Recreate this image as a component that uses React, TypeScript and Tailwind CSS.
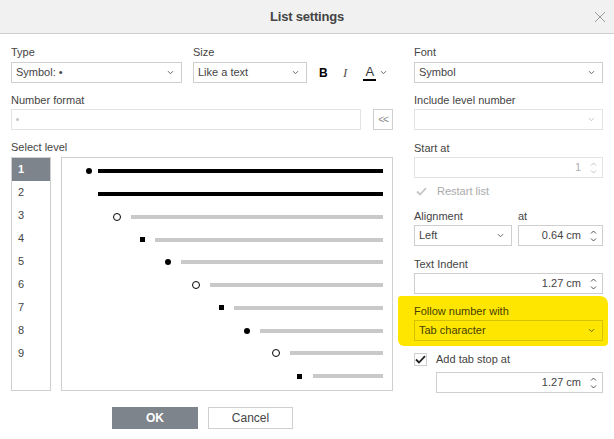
import React from 'react';

const font = { fontFamily: '"Liberation Sans", Arial, sans-serif' };

const Chevron = ({ light }: { light?: boolean }) => (
    <svg width="7" height="5" viewBox="0 0 7 5" className="shrink-0">
        <path d="M1 1.2l2.5 2.5L6 1.2" fill="none" stroke={light ? '#c4c4c4' : '#666'} strokeWidth="1" />
    </svg>
);

const Spinner = ({ light }: { light?: boolean }) => (
    <svg width="7" height="14" viewBox="0 0 7 14" className="shrink-0">
        <path d="M1 4.5l2.5-2.5L6 4.5" fill="none" stroke={light ? '#c4c4c4' : '#555'} strokeWidth="1" />
        <path d="M1 9.5l2.5 2.5L6 9.5" fill="none" stroke={light ? '#c4c4c4' : '#555'} strokeWidth="1" />
    </svg>
);

const Check = ({ color }: { color: string }) => (
    <svg width="11" height="9" viewBox="0 0 11 9">
        <path d="M1 4.5l3 3L10 1.2" fill="none" stroke={color} strokeWidth="1.8" />
    </svg>
);

interface FieldProps {
    value?: string;
    disabled?: boolean;
    className?: string;
}

const SelectBox: React.FC<FieldProps> = ({ value, disabled, className = '' }) => (
    <div
        className={`flex items-center justify-between h-[21px] border pl-[4px] pr-[7px] text-[11px] ${
            disabled ? 'border-[#e3e3e3]' : 'border-[#cfcfcf]'
        } ${className}`}
    >
        <span className="text-[#444]">{value}</span>
        <Chevron light={disabled} />
    </div>
);

const NumberBox: React.FC<FieldProps> = ({ value, disabled, className = '' }) => (
    <div
        className={`flex items-center justify-end gap-[9px] h-[21px] border pr-[5px] text-[11px] ${
            disabled ? 'border-[#e3e3e3] text-[#b0b0b0]' : 'border-[#cfcfcf] text-[#444]'
        } ${className}`}
    >
        <span>{value}</span>
        <Spinner light={disabled} />
    </div>
);

const Label = ({ children, className = '' }: { children: React.ReactNode; className?: string }) => (
    <div className={`h-[16px] leading-[15px] text-[11px] text-[#444] ${className}`}>{children}</div>
);

type Bullet = 'dot' | 'circle' | 'square' | null;

const previewRows: { bullet: Bullet; bulletClass: string; lineClass: string; black?: boolean }[] = [
    { bullet: 'dot', bulletClass: 'ml-[24px]', lineClass: 'ml-[6px]', black: true },
    { bullet: null, bulletClass: '', lineClass: 'ml-[36px]', black: true },
    { bullet: 'circle', bulletClass: 'ml-[51px]', lineClass: 'ml-[10px]' },
    { bullet: 'square', bulletClass: 'ml-[78px]', lineClass: 'ml-[10px]' },
    { bullet: 'dot', bulletClass: 'ml-[103px]', lineClass: 'ml-[10px]' },
    { bullet: 'circle', bulletClass: 'ml-[130px]', lineClass: 'ml-[10px]' },
    { bullet: 'square', bulletClass: 'ml-[157px]', lineClass: 'ml-[10px]' },
    { bullet: 'dot', bulletClass: 'ml-[182px]', lineClass: 'ml-[10px]' },
    { bullet: 'circle', bulletClass: 'ml-[210px]', lineClass: 'ml-[10px]' },
    { bullet: 'square', bulletClass: 'ml-[235px]', lineClass: 'ml-[11px]' },
];

const BulletMark = ({ kind }: { kind: Bullet }) => {
    if (kind === 'dot') return <span className="block w-[6px] h-[6px] rounded-full bg-black" />;
    if (kind === 'circle') return <span className="block w-[8px] h-[8px] rounded-full border border-black" />;
    if (kind === 'square') return <span className="block w-[5px] h-[5px] bg-black" />;
    return null;
};

const App: React.FC = () => {
    return (
        <div className="w-[614px] h-[439px] bg-white overflow-hidden text-[#444]" style={font}>
            {/* header */}
            <div className="grid grid-cols-[1fr_auto_1fr] items-center h-[34px] bg-[#f1f1f1] border-b border-[#cfcfcf]">
                <div />
                <div className="text-[13px] font-bold text-[#444] tracking-[-0.2px]">List settings</div>
                <div className="flex justify-end pr-[8px]">
                    <svg width="12" height="12" viewBox="0 0 12 12">
                        <path d="M1 1l10 10M11 1L1 11" stroke="#9a9a9a" strokeWidth="1" />
                    </svg>
                </div>
            </div>

            <div className="flex px-[11px] pt-[11px] gap-[21px]">
                {/* left column */}
                <div className="w-[382px] flex flex-col">
                    <div className="flex items-end">
                        <div className="w-[171px]">
                            <Label className="h-[17px]">Type</Label>
                            <SelectBox value="Symbol: •" />
                        </div>
                        <div className="w-[114px] ml-[11px]">
                            <Label className="h-[17px]">Size</Label>
                            <SelectBox value="Like a text" />
                        </div>
                        <div className="flex items-center h-[21px] ml-[12px] text-black">
                            <span className="text-[12px] font-bold w-[8px]">B</span>
                            <span
                                className="ml-[16px] text-[13px] italic text-[#555]"
                                style={{ fontFamily: '"Liberation Serif", serif' }}
                            >
                                I
                            </span>
                            <span className="ml-[16px] flex flex-col items-center w-[13px]">
                                <span className="text-[13px] leading-[13px] text-[#333]">A</span>
                                <span className="block w-[13px] h-[2px] bg-black mt-[1px]" />
                            </span>
                            <span className="ml-[4px]">
                                <Chevron />
                            </span>
                        </div>
                    </div>

                    <Label className="mt-[10px]">Number format</Label>
                    <div className="flex items-center">
                        <div className="flex-1 h-[21px] border border-[#e3e3e3] flex items-center pl-[4px]">
                            <span className="block w-[3px] h-[3px] rounded-full bg-[#c4c4c4]" />
                        </div>
                        <div className="ml-[12px] w-[20px] h-[21px] border border-[#cfcfcf] flex items-center justify-center text-[10px] text-[#888] tracking-[-1px]">
                            &lt;&lt;
                        </div>
                    </div>

                    <Label className="mt-[10px] h-[17px]">Select level</Label>
                    <div className="flex gap-[10px] h-[234px]">
                        <div className="w-[40px] border border-[#cfcfcf] flex flex-col">
                            {[1, 2, 3, 4, 5, 6, 7, 8, 9].map((n) => (
                                <div
                                    key={n}
                                    className={`h-[23px] flex items-center pl-[6px] text-[11px] ${
                                        n === 1 ? 'bg-[#7d848b] text-white font-bold' : 'text-[#444]'
                                    }`}
                                >
                                    {n}
                                </div>
                            ))}
                        </div>
                        <div className="flex-1 border border-[#cfcfcf] flex flex-col pt-[2px] pr-[9px]">
                            {previewRows.map((row, i) => (
                                <div key={i} className="h-[22.75px] flex items-center">
                                    {row.bullet && (
                                        <span className={row.bulletClass}>
                                            <BulletMark kind={row.bullet} />
                                        </span>
                                    )}
                                    <span
                                        className={`${row.lineClass} flex-1 h-[4px] ${
                                            row.black ? 'bg-black' : 'bg-[#c9c9c9]'
                                        }`}
                                    />
                                </div>
                            ))}
                        </div>
                    </div>

                    <div className="flex justify-center gap-[10px] mt-[16px] pl-[1px]">
                        <button className="w-[86px] h-[22px] bg-[#7d848b] text-white font-bold text-[12px]">OK</button>
                        <button className="w-[85px] h-[22px] border border-[#cfcfcf] bg-white text-[#444] text-[12px]">
                            Cancel
                        </button>
                    </div>
                </div>

                {/* right column */}
                <div className="w-[189px] flex flex-col">
                    <Label className="h-[17px]">Font</Label>
                    <SelectBox value="Symbol" />

                    <Label className="mt-[10px]">Include level number</Label>
                    <SelectBox disabled />

                    <Label className="mt-[11px]">Start at</Label>
                    <NumberBox value="1" disabled />

                    <div className="mt-[6px] h-[14px] flex items-center">
                        <span className="w-[13px] h-[13px] ml-[1px] flex items-center justify-center">
                            <Check color="#c6c6c6" />
                        </span>
                        <span className="ml-[9px] text-[11px] text-[#aaa]">Restart list</span>
                    </div>

                    <div className="mt-[11px] flex gap-[6px]">
                        <div className="w-[98px]">
                            <Label>Alignment</Label>
                            <SelectBox value="Left" />
                        </div>
                        <div className="flex-1">
                            <Label>at</Label>
                            <NumberBox value="0.64 cm" />
                        </div>
                    </div>

                    <Label className="mt-[11px]">Text Indent</Label>
                    <NumberBox value="1.27 cm" />

                    <div className="mt-[2px] -ml-[16px] -mr-[5px] pl-[16px] pr-[5px] pt-[8px] pb-[5px] bg-[#ffe600] rounded-tl-[3px] rounded-tr-[8px] rounded-bl-[6px] rounded-br-[4px]">
                        <div className="h-[16px] leading-[15px] text-[11px] text-[#454000]">Follow number with</div>
                        <div className="flex items-center justify-between h-[21px] border border-[#d2c200] pl-[4px] pr-[7px] text-[11px]">
                            <span className="text-[#454000]">Tab character</span>
                            <svg width="7" height="5" viewBox="0 0 7 5">
                                <path d="M1 1.2l2.5 2.5L6 1.2" fill="none" stroke="#675f00" strokeWidth="1" />
                            </svg>
                        </div>
                    </div>

                    <div className="mt-[6px] h-[14px] flex items-center">
                        <span className="w-[13px] h-[13px] border border-[#cfcfcf] flex items-center justify-center">
                            <Check color="#222" />
                        </span>
                        <span className="ml-[9px] text-[11px] text-[#444]">Add tab stop at</span>
                    </div>
                    <NumberBox value="1.27 cm" className="mt-[6px] ml-[22px]" />
                </div>
            </div>
        </div>
    );
};

export default App;
